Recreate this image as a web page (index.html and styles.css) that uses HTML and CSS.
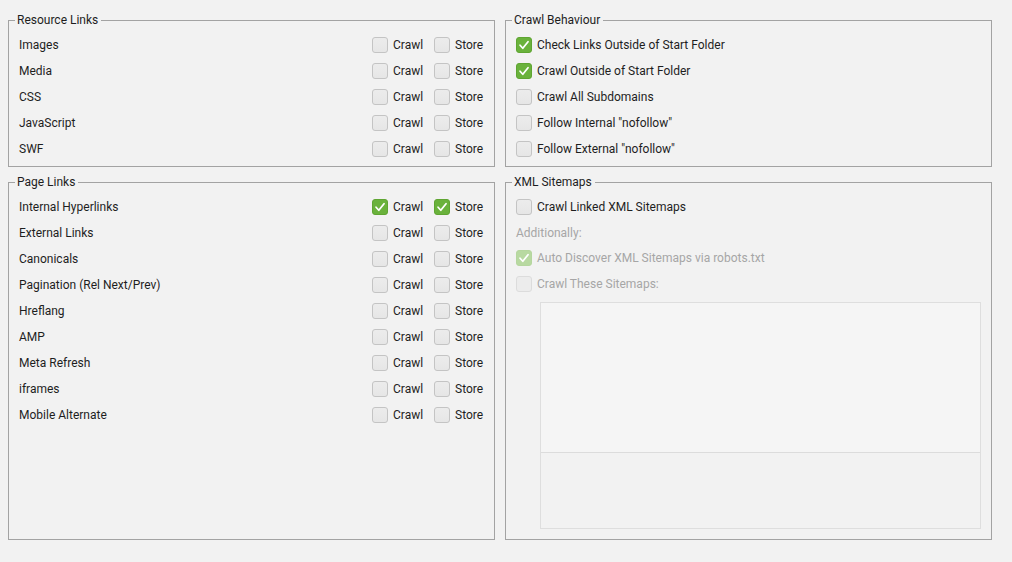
FILE: index.html
```html
<!DOCTYPE html>
<html>
<head>
<meta charset="utf-8">
<link rel="stylesheet" href="styles.css">
</head>
<body>
<div class="page">
  <fieldset class="group">
    <legend>Resource Links</legend>
    <div class="row"><span class="name">Images</span><span class="opt crawl"><span class="cb"></span>Crawl</span><span class="opt store"><span class="cb"></span>Store</span></div>
    <div class="row"><span class="name">Media</span><span class="opt crawl"><span class="cb"></span>Crawl</span><span class="opt store"><span class="cb"></span>Store</span></div>
    <div class="row"><span class="name">CSS</span><span class="opt crawl"><span class="cb"></span>Crawl</span><span class="opt store"><span class="cb"></span>Store</span></div>
    <div class="row"><span class="name">JavaScript</span><span class="opt crawl"><span class="cb"></span>Crawl</span><span class="opt store"><span class="cb"></span>Store</span></div>
    <div class="row"><span class="name">SWF</span><span class="opt crawl"><span class="cb"></span>Crawl</span><span class="opt store"><span class="cb"></span>Store</span></div>
  </fieldset>
  <fieldset class="group">
    <legend>Crawl Behaviour</legend>
    <div class="row"><span class="opt"><span class="cb on"><svg viewBox="0 0 16 16"><path d="M3.5 8.3 L6.6 11.7 L12.6 4.3"/></svg></span>Check Links Outside of Start Folder</span></div>
    <div class="row"><span class="opt"><span class="cb on"><svg viewBox="0 0 16 16"><path d="M3.5 8.3 L6.6 11.7 L12.6 4.3"/></svg></span>Crawl Outside of Start Folder</span></div>
    <div class="row"><span class="opt"><span class="cb"></span>Crawl All Subdomains</span></div>
    <div class="row"><span class="opt"><span class="cb"></span>Follow Internal "nofollow"</span></div>
    <div class="row"><span class="opt"><span class="cb"></span>Follow External "nofollow"</span></div>
  </fieldset>
  <fieldset class="group">
    <legend>Page Links</legend>
    <div class="row"><span class="name">Internal Hyperlinks</span><span class="opt crawl"><span class="cb on"><svg viewBox="0 0 16 16"><path d="M3.5 8.3 L6.6 11.7 L12.6 4.3"/></svg></span>Crawl</span><span class="opt store"><span class="cb on"><svg viewBox="0 0 16 16"><path d="M3.5 8.3 L6.6 11.7 L12.6 4.3"/></svg></span>Store</span></div>
    <div class="row"><span class="name">External Links</span><span class="opt crawl"><span class="cb"></span>Crawl</span><span class="opt store"><span class="cb"></span>Store</span></div>
    <div class="row"><span class="name">Canonicals</span><span class="opt crawl"><span class="cb"></span>Crawl</span><span class="opt store"><span class="cb"></span>Store</span></div>
    <div class="row"><span class="name">Pagination (Rel Next/Prev)</span><span class="opt crawl"><span class="cb"></span>Crawl</span><span class="opt store"><span class="cb"></span>Store</span></div>
    <div class="row"><span class="name">Hreflang</span><span class="opt crawl"><span class="cb"></span>Crawl</span><span class="opt store"><span class="cb"></span>Store</span></div>
    <div class="row"><span class="name">AMP</span><span class="opt crawl"><span class="cb"></span>Crawl</span><span class="opt store"><span class="cb"></span>Store</span></div>
    <div class="row"><span class="name">Meta Refresh</span><span class="opt crawl"><span class="cb"></span>Crawl</span><span class="opt store"><span class="cb"></span>Store</span></div>
    <div class="row"><span class="name">iframes</span><span class="opt crawl"><span class="cb"></span>Crawl</span><span class="opt store"><span class="cb"></span>Store</span></div>
    <div class="row"><span class="name">Mobile Alternate</span><span class="opt crawl"><span class="cb"></span>Crawl</span><span class="opt store"><span class="cb"></span>Store</span></div>
  </fieldset>
  <fieldset class="group">
    <legend>XML Sitemaps</legend>
    <div class="row"><span class="opt"><span class="cb"></span>Crawl Linked XML Sitemaps</span></div>
    <div class="row note">Additionally:</div>
    <div class="row"><span class="opt disabled"><span class="cb on"><svg viewBox="0 0 16 16"><path d="M3.5 8.3 L6.6 11.7 L12.6 4.3"/></svg></span>Auto Discover XML Sitemaps via robots.txt</span></div>
    <div class="row"><span class="opt disabled"><span class="cb"></span>Crawl These Sitemaps:</span></div>
    <div class="sitemaps">
      <div class="pane top"></div>
      <div class="pane bottom"></div>
    </div>
  </fieldset>
</div>
</body>
</html>
```
FILE: styles.css
```css
html, body {
  margin: 0;
  padding: 0;
  background: #f2f2f2;
}
body {
  font-family: Roboto, "Liberation Sans", sans-serif;
  font-size: 12px;
  color: #1e1e1e;
}
.page {
  display: grid;
  grid-template-columns: 487px 487px;
  grid-template-rows: 155px 366px;
  column-gap: 10px;
  row-gap: 7px;
  padding: 12px 0 0 8px;
}
.group {
  margin: 0;
  border: 1px solid #a3a3a3;
  padding: 4px 10px 0 10px;
  min-width: 0;
  box-sizing: border-box;
  display: flex;
  flex-direction: column;
}
.group legend {
  margin-left: -4px;
  padding: 0 3px 0 2px;
  line-height: 16px;
  color: #1e1e1e;
}
.row {
  display: flex;
  align-items: center;
  height: 26px;
}
.name {
  flex: 1;
}
.opt {
  display: flex;
  align-items: center;
  gap: 5px;
  white-space: nowrap;
}
.opt.crawl { width: 62px; }
.opt.store { width: 50px; }
.cb {
  width: 16px;
  height: 16px;
  box-sizing: border-box;
  border: 1px solid #c4c4c4;
  border-radius: 3px;
  background: linear-gradient(#ececec, #e6e6e6);
  display: inline-flex;
  align-items: center;
  justify-content: center;
  flex: none;
}
.cb.on {
  border-color: #5fa532;
  background: #6ab23c;
}
.cb svg {
  width: 16px;
  height: 16px;
}
.cb svg path {
  fill: none;
  stroke: #ffffff;
  stroke-width: 2;
  stroke-linecap: round;
  stroke-linejoin: round;
}
.disabled {
  color: #a6a6a6;
}
.disabled .cb {
  border-color: #dcdcdc;
  background: #ececec;
}
.disabled .cb.on {
  border-color: #b5d69e;
  background: #b8d9a1;
}
.note {
  color: #a6a6a6;
  height: 25px;
}
.sitemaps {
  margin: 5px 0 0 24px;
  width: 441px;
  height: 227px;
  box-sizing: border-box;
  border: 1px solid #dedede;
  box-shadow: inset 0 0 0 1px #f8f8f8;
  display: flex;
  flex-direction: column;
}
.pane.top {
  height: 149px;
  background: #f5f5f5;
  border-bottom: 1px solid #dcdcdc;
  box-shadow: 0 1px 0 #f8f8f8;
}
.pane.bottom {
  flex: 1;
  background: #f2f2f2;
}
```
